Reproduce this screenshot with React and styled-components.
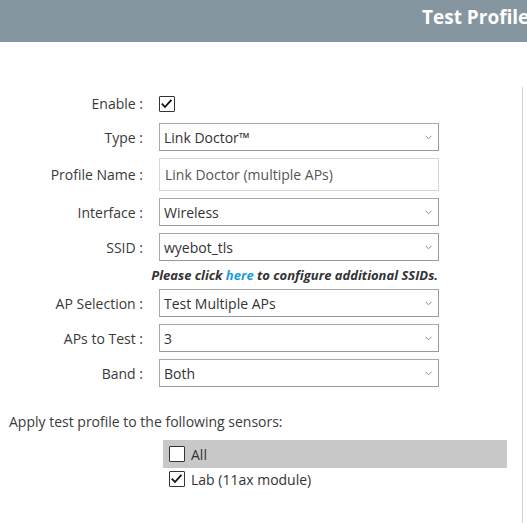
import React from "react";
import styled, { createGlobalStyle } from "styled-components";

const GlobalStyle = createGlobalStyle`
  html, body { margin: 0; padding: 0; background: #fff; }
  body { font-family: "Open Sans", "Liberation Sans", sans-serif; color: #3a3a3a; }
  * { box-sizing: border-box; }
`;

const Page = styled.div`
  display: flex;
  flex-direction: column;
  min-height: 100vh;
  width: 527px;
  overflow: hidden;
`;

const Header = styled.header`
  height: 42px;
  background: #8596a0;
  padding: 4px 0 0 422px;
  overflow: hidden;
  white-space: nowrap;
`;

const Title = styled.h1`
  margin: 0;
  font-size: 19px;
  font-weight: 700;
  line-height: 26px;
  color: #fff;
`;

const Panel = styled.main`
  flex: 1;
  margin-top: 45px;
  width: 523px;
  border-right: 1px solid #d2d2d2;
  padding: 7px 0 0 9px;
`;

const Form = styled.div`
  display: flex;
  flex-direction: column;
  gap: 7px;
`;

const Row = styled.div`
  display: grid;
  grid-template-columns: 134px 280px;
  column-gap: 16px;
  align-items: center;
  margin-bottom: ${(p) => p.$after || 0}px;
`;

const Label = styled.label`
  text-align: right;
  font-size: 14px;
  line-height: 19px;
  color: #3a3a3a;
  white-space: nowrap;
`;

const Box = styled.span`
  display: inline-flex;
  width: 16px;
  height: 16px;
  border: 1.5px solid #333;
  border-radius: 1px;
  background: #fff;
  flex: none;
`;

const Check = ({ checked }) => (
  <Box>
    {checked && (
      <svg width="13" height="13" viewBox="0 0 13 13">
        <polyline
          points="1.8,6.6 5,10 11.4,2.8"
          fill="none"
          stroke="#111"
          strokeWidth="1.8"
        />
      </svg>
    )}
  </Box>
);

const SelectBox = styled.div`
  height: 28px;
  display: flex;
  align-items: center;
  justify-content: space-between;
  padding: 0 6px 0 4px;
  border: 1px solid #a8a8a8;
  border-right-color: #999;
  border-bottom-color: #999;
  background: #fff;
  font-size: 14px;
  color: #333;
  white-space: nowrap;
`;

const Chevron = () => (
  <svg width="7" height="5" viewBox="0 0 7 5">
    <polyline points="0.5,0.8 3.5,3.8 6.5,0.8" fill="none" stroke="#8a8a8a" strokeWidth="1" />
  </svg>
);

const Select = ({ value }) => (
  <SelectBox>
    <span>{value}</span>
    <Chevron />
  </SelectBox>
);

const TextInput = styled.div`
  height: 33px;
  display: flex;
  align-items: center;
  padding: 0 5px;
  border: 1px solid #d6d6d6;
  font-size: 14px;
  color: #555;
  white-space: nowrap;
`;

const Note = styled.p`
  margin: 0;
  width: 429px;
  height: 14px;
  text-align: right;
  font-size: 13px;
  line-height: 14px;
  font-weight: 700;
  font-style: italic;
  color: #333;
  white-space: nowrap;
`;

const Link = styled.a`
  color: #1a9be3;
  text-decoration: none;
`;

const ApplyText = styled.p`
  margin: 25px 0 0;
  font-size: 14px;
  line-height: 19px;
  color: #3a3a3a;
`;

const SensorList = styled.ul`
  list-style: none;
  margin: 9px 0 0 154px;
  padding: 0;
  width: 344px;
`;

const Sensor = styled.li`
  display: flex;
  align-items: center;
  gap: 6px;
  height: ${(p) => (p.$highlight ? 28 : 22)}px;
  padding-left: 6px;
  background: ${(p) => (p.$highlight ? "#c8c8c8" : "transparent")};
  font-size: 14px;
  color: #333;
`;

export default function App() {
  const selects = [
    ["AP Selection :", "Test Multiple APs"],
    ["APs to Test :", "3"],
    ["Band :", "Both"],
  ];
  return (
    <>
      <GlobalStyle />
      <Page>
        <Header>
          <Title>Test Profile</Title>
        </Header>
        <Panel>
          <Form>
            <Row $after={3}>
              <Label>Enable :</Label>
              <Check checked />
            </Row>
            <Row>
              <Label>Type :</Label>
              <Select value="Link Doctor™" />
            </Row>
            <Row>
              <Label>Profile Name :</Label>
              <TextInput>Link Doctor (multiple APs)</TextInput>
            </Row>
            <Row>
              <Label>Interface :</Label>
              <Select value="Wireless" />
            </Row>
            <Row>
              <Label>SSID :</Label>
              <Select value="wyebot_tls" />
            </Row>
            <Note>
              Please click <Link href="#">here</Link> to configure additional SSIDs.
            </Note>
            {selects.map(([l, v]) => (
              <Row key={l}>
                <Label>{l}</Label>
                <Select value={v} />
              </Row>
            ))}
          </Form>
          <ApplyText>Apply test profile to the following sensors:</ApplyText>
          <SensorList>
            <Sensor $highlight>
              <Check />
              All
            </Sensor>
            <Sensor>
              <Check checked />
              Lab (11ax module)
            </Sensor>
          </SensorList>
        </Panel>
      </Page>
    </>
  );
}
